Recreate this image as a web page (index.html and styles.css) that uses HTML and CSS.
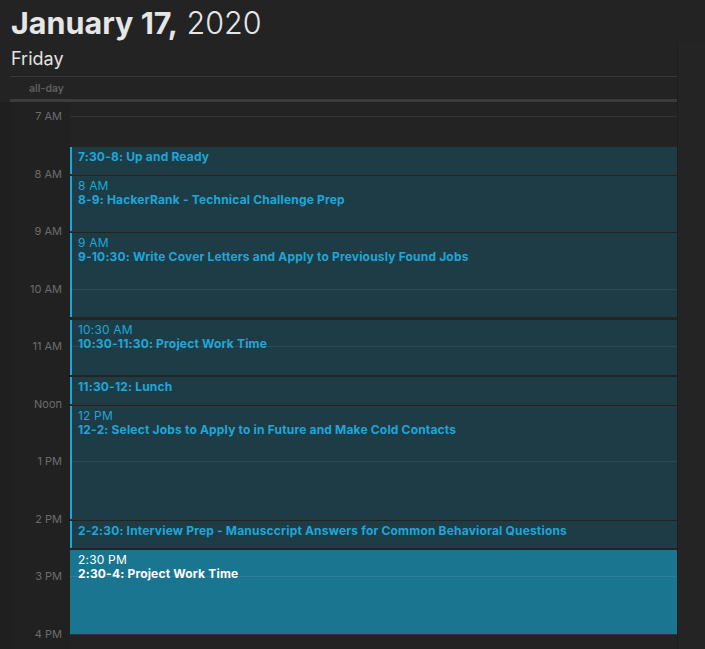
FILE: index.html
```html
<!DOCTYPE html>
<html>
<head>
<meta charset="utf-8">
<link rel="stylesheet" href="styles.css">
</head>
<body>
<div class="page">
  <div class="main">
    <header class="head">
      <h1 class="date"><span class="md">January 17,</span> <span class="year">2020</span></h1>
      <div class="weekday">Friday</div>
    </header>
    <div class="allday"><span class="allday-label">all-day</span></div>
    <div class="timeline">
      <div class="row top"><div class="strip"></div><div class="gutter"></div><div class="slot blank"></div></div>
      <div class="row"><div class="strip"></div><div class="gutter"><span class="lab">7 AM</span></div><div class="slot"></div></div>
      <div class="row"><div class="strip"></div><div class="gutter"><span class="lab">8 AM</span></div><div class="slot"></div></div>
      <div class="row"><div class="strip"></div><div class="gutter"><span class="lab">9 AM</span></div><div class="slot"></div></div>
      <div class="row"><div class="strip"></div><div class="gutter"><span class="lab">10 AM</span></div><div class="slot"></div></div>
      <div class="row"><div class="strip"></div><div class="gutter"><span class="lab">11 AM</span></div><div class="slot"></div></div>
      <div class="row"><div class="strip"></div><div class="gutter"><span class="lab">Noon</span></div><div class="slot"></div></div>
      <div class="row"><div class="strip"></div><div class="gutter"><span class="lab">1 PM</span></div><div class="slot"></div></div>
      <div class="row"><div class="strip"></div><div class="gutter"><span class="lab">2 PM</span></div><div class="slot"></div></div>
      <div class="row"><div class="strip"></div><div class="gutter"><span class="lab">3 PM</span></div><div class="slot"></div></div>
      <div class="row"><div class="strip"></div><div class="gutter"><span class="lab">4 PM</span></div><div class="slot"></div></div>

      <div class="events">
        <div class="ev" style="top:30.8px;height:26.8px"><div class="n">7:30-8: Up and Ready</div></div>
        <div class="ev" style="top:59.6px;height:55.6px"><div class="t">8 AM</div><div class="n">8-9: HackerRank - Technical Challenge Prep</div></div>
        <div class="ev" style="top:117.1px;height:84.3px"><div class="t">9 AM</div><div class="n">9-10:30: Write Cover Letters and Apply to Previously Found Jobs</div></div>
        <div class="ev" style="top:203.5px;height:55.6px"><div class="t">10:30 AM</div><div class="n">10:30-11:30: Project Work Time</div></div>
        <div class="ev" style="top:261.0px;height:26.8px"><div class="n">11:30-12: Lunch</div></div>
        <div class="ev" style="top:289.8px;height:113.1px"><div class="t">12 PM</div><div class="n">12-2: Select Jobs to Apply to in Future and Make Cold Contacts</div></div>
        <div class="ev" style="top:404.9px;height:26.8px"><div class="n">2-2:30: Interview Prep - Manusccript Answers for Common Behavioral Questions</div></div>
        <div class="ev sel" style="top:433.7px;height:84.3px"><div class="t">2:30 PM</div><div class="n">2:30-4: Project Work Time</div></div>
      </div>
    </div>
  </div>
  <div class="side"></div>
</div>
</body>
</html>
```

FILE: styles.css
```css
html, body {
  margin: 0;
  padding: 0;
  background: #232323;
  height: 100%;
  overflow: hidden;
}
body {
  font-family: Inter, "Noto Sans", "Liberation Sans", sans-serif;
  color: #e4e4e4;
}
.page {
  display: flex;
  height: 649px;
}
.main {
  width: 677px;
  flex: none;
  display: flex;
  flex-direction: column;
}
.side {
  flex: 1;
  margin-top: 43px;
  background: #242424;
  border-left: 1px solid #1d1d1d;
}
.head {
  padding-left: 11px;
}
.date {
  margin: 5px 0 0 0;
  font-size: 30.5px;
  line-height: 36px;
  font-weight: 400;
  letter-spacing: 0;
  color: #e6e6e6;
}
.md {
  font-weight: 700;
}
.year {
  font-weight: 300;
}
.weekday {
  margin-top: 7px;
  font-size: 18px;
  line-height: 22px;
  font-weight: 400;
  color: #e2e2e2;
  padding-bottom: 6px;
}
.allday {
  margin-left: 10px;
  border-top: 1px solid #3a3a3a;
  border-bottom: 3px solid #3c3c3c;
  height: 22px;
  display: flex;
  align-items: center;
}
.allday-label {
  width: 54px;
  text-align: right;
  font-size: 10.5px;
  font-weight: 600;
  color: #5f5f5f;
}
.timeline {
  position: relative;
  flex: 1;
  overflow: hidden;
  display: flex;
  flex-direction: column;
}
.row {
  display: flex;
  height: 57.56px;
  flex: none;
}
.row.top {
  height: 14px;
}
.strip {
  width: 12px;
  background: #1f1f1f;
  flex: none;
}
.gutter {
  width: 58px;
  flex: none;
  background: #212121;
  padding-right: 8px;
  box-sizing: border-box;
  text-align: right;
}
.lab {
  display: block;
  margin-top: -7px;
  line-height: 14px;
  font-size: 11px;
  color: #6c6c6c;
}
.slot {
  flex: 1;
  border-top: 1px solid rgba(255, 255, 255, 0.075);
  position: relative;
  z-index: 2;
}
.slot.blank {
  border-top: none;
}
.events {
  position: absolute;
  left: 70px;
  right: 0;
  top: 14px;
  bottom: 0;
  z-index: 1;
}
.ev {
  position: absolute;
  left: 0;
  right: 0;
  box-sizing: border-box;
  background: #1d3c45;
  border-left: 2px solid #1ba7d8;
  padding: 3px 0 0 6px;
  color: #20a6d8;
  font-size: 12px;
  line-height: 14px;
  letter-spacing: 0.18px;
  overflow: hidden;
  white-space: nowrap;
}
.ev .t {
  font-weight: 400;
}
.ev .n {
  font-weight: 700;
}
.ev.sel {
  background: #1a7690;
  border-left-color: #1a7690;
  color: #ffffff;
}
```
